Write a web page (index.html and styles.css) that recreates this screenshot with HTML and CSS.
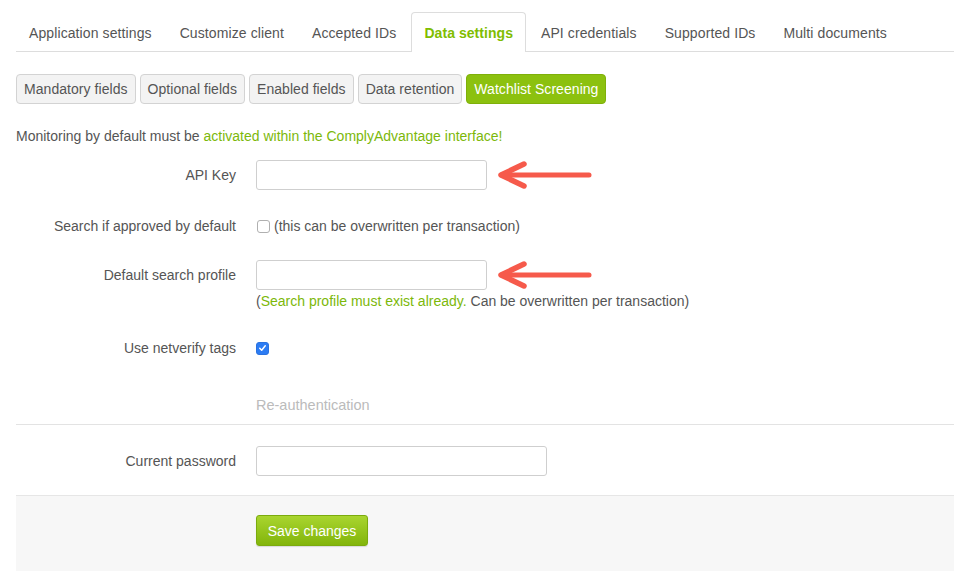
FILE: index.html
```html
<!DOCTYPE html>
<html>
<head>
<meta charset="utf-8">
<link rel="stylesheet" href="styles.css">
</head>
<body>
<div class="page">
  <ul class="tabs">
    <li class="tab">Application settings</li>
    <li class="tab">Customize client</li>
    <li class="tab">Accepted IDs</li>
    <li class="tab active">Data settings</li>
    <li class="tab">API credentials</li>
    <li class="tab">Supported IDs</li>
    <li class="tab">Multi documents</li>
  </ul>

  <div class="pills">
    <span class="pill">Mandatory fields</span>
    <span class="pill">Optional fields</span>
    <span class="pill">Enabled fields</span>
    <span class="pill">Data retention</span>
    <span class="pill pill-active">Watchlist Screening</span>
  </div>

  <p class="notice">Monitoring by default must be <span class="green">activated within the ComplyAdvantage interface!</span></p>

  <div class="form">
    <div class="row row-api">
      <label class="label">API Key</label>
      <div class="control">
        <input class="input input-short" type="text">
        <svg class="arrow" width="98" height="30" viewBox="0 0 98 30"><path d="M5 15 H92" stroke="#f65a4b" stroke-width="5" stroke-linecap="round" fill="none"/><path d="M27 4 L4 15 L27 26" stroke="#f65a4b" stroke-width="5.5" stroke-linecap="round" stroke-linejoin="round" fill="none"/></svg>
      </div>
    </div>

    <div class="row row-search">
      <label class="label">Search if approved by default</label>
      <div class="control">
        <span class="checkbox"></span>
        <span class="hint">(this can be overwritten per transaction)</span>
      </div>
    </div>

    <div class="row row-profile">
      <label class="label">Default search profile</label>
      <div class="control-stack">
        <div class="control">
          <input class="input input-short" type="text">
          <svg class="arrow" width="98" height="30" viewBox="0 0 98 30"><path d="M5 15 H92" stroke="#f65a4b" stroke-width="5" stroke-linecap="round" fill="none"/><path d="M27 4 L4 15 L27 26" stroke="#f65a4b" stroke-width="5.5" stroke-linecap="round" stroke-linejoin="round" fill="none"/></svg>
        </div>
        <div class="help">(<span class="green">Search profile must exist already.</span> Can be overwritten per transaction)</div>
      </div>
    </div>

    <div class="row row-tags">
      <label class="label">Use netverify tags</label>
      <div class="control">
        <span class="checkbox checked"><svg width="12" height="12" viewBox="0 0 12 12"><path d="M3 6.3 L5.1 8.4 L9 3.6" stroke="#fff" stroke-width="1.6" fill="none" stroke-linecap="round" stroke-linejoin="round"/></svg></span>
      </div>
    </div>

    <div class="row row-reauth">
      <span class="label"></span>
      <span class="section-title">Re-authentication</span>
    </div>
  </div>

  <div class="divider"></div>

  <div class="form">
    <div class="row row-password">
      <label class="label">Current password</label>
      <div class="control">
        <input class="input input-long" type="password">
      </div>
    </div>
  </div>

  <div class="footer">
    <div class="row">
      <span class="label"></span>
      <div class="control">
        <button class="save">Save changes</button>
      </div>
    </div>
  </div>
</div>
</body>
</html>
```

FILE: styles.css
```css
* { box-sizing: border-box; }

html, body {
  margin: 0;
  padding: 0;
  background: #fff;
}

body {
  font-family: "Liberation Sans", Arial, Helvetica, sans-serif;
  font-size: 14px;
  line-height: 20px;
  color: #555;
}

.page {
  padding: 12px 0 0 16px;
  height: 571px;
  overflow: hidden;
}

.tabs {
  list-style: none;
  margin: 0;
  padding: 0;
  display: flex;
  border-bottom: 1px solid #ddd;
}

.tab {
  padding: 10px 12px 8px;
  border: 1px solid transparent;
  border-bottom: none;
  margin-right: 2px;
  border-radius: 4px 4px 0 0;
  color: #555;
  white-space: nowrap;
  letter-spacing: 0.1px;
}

.tab.active {
  border-color: #ddd;
  background: #fff;
  color: #80bd01;
  font-weight: bold;
  margin-bottom: -1px;
  padding-bottom: 9px;
  letter-spacing: 0.05px;
}

.pills {
  display: flex;
  gap: 4px;
  margin-top: 22px;
}

.pill {
  display: inline-block;
  padding: 4px 7px;
  border: 1px solid #d3d3d3;
  border-radius: 4px;
  background: #f3f3f3;
  color: #555;
  white-space: nowrap;
  letter-spacing: 0.05px;
}

.pill-active {
  background: #8cc10f;
  border-color: #7fb00a;
  color: #fff;
}

.notice {
  margin: 22px 0 0;
}

.green {
  color: #7cb80a;
}

.form {
  display: flex;
  flex-direction: column;
}

.row {
  display: grid;
  grid-template-columns: 220px 1fr;
  column-gap: 20px;
  align-items: start;
}

.label {
  text-align: right;
  line-height: 30px;
  color: #555;
  white-space: nowrap;
}

.control {
  display: flex;
  align-items: center;
  min-height: 30px;
}

.control-stack {
  display: flex;
  flex-direction: column;
}

.input {
  height: 30px;
  border: 1px solid #cfcfcf;
  border-radius: 3px;
  background: #fff;
  padding: 4px 6px;
  font: inherit;
  outline: none;
}

.input-short { width: 231px; }
.input-long { width: 291px; }

.arrow {
  margin-left: 10px;
  display: block;
}

.row-api { margin-top: 14px; }
.row-search { margin-top: 21px; }
.row-profile { margin-top: 19px; }
.row-tags { margin-top: 22px; }
.row-reauth { margin-top: 32px; }

.checkbox {
  width: 13px;
  height: 13px;
  border: 1px solid #b0b0b0;
  border-radius: 3px;
  background: #fff;
  margin-left: 1px;
  margin-right: 4px;
  display: inline-flex;
  align-items: center;
  justify-content: center;
}

.checkbox.checked {
  margin-left: 0;
  background: #2c7cf3;
  border-color: #2a72e0;
}

.hint {
  color: #555;
}

.help {
  line-height: 20px;
  margin-top: 1px;
  color: #555;
}

.section-title {
  color: #bbb;
  line-height: 20px;
  font-size: 14.5px;
}

.divider {
  border-top: 1px solid #e3e3e3;
  margin-top: 9px;
}

.row-password { margin-top: 21px; }

.footer {
  margin-top: 19px;
  border-top: 1px solid #e6e6e6;
  background: #f7f7f7;
  padding-top: 19px;
  height: 100px;
}

.save {
  height: 31px;
  width: 112px;
  font: inherit;
  color: #fff;
  border: 1px solid #7bab0d;
  border-radius: 3px;
  background: linear-gradient(#a9d52f, #82b50b);
  padding: 0;
  box-shadow: 0 1px 1px rgba(0,0,0,0.12);
}
```
